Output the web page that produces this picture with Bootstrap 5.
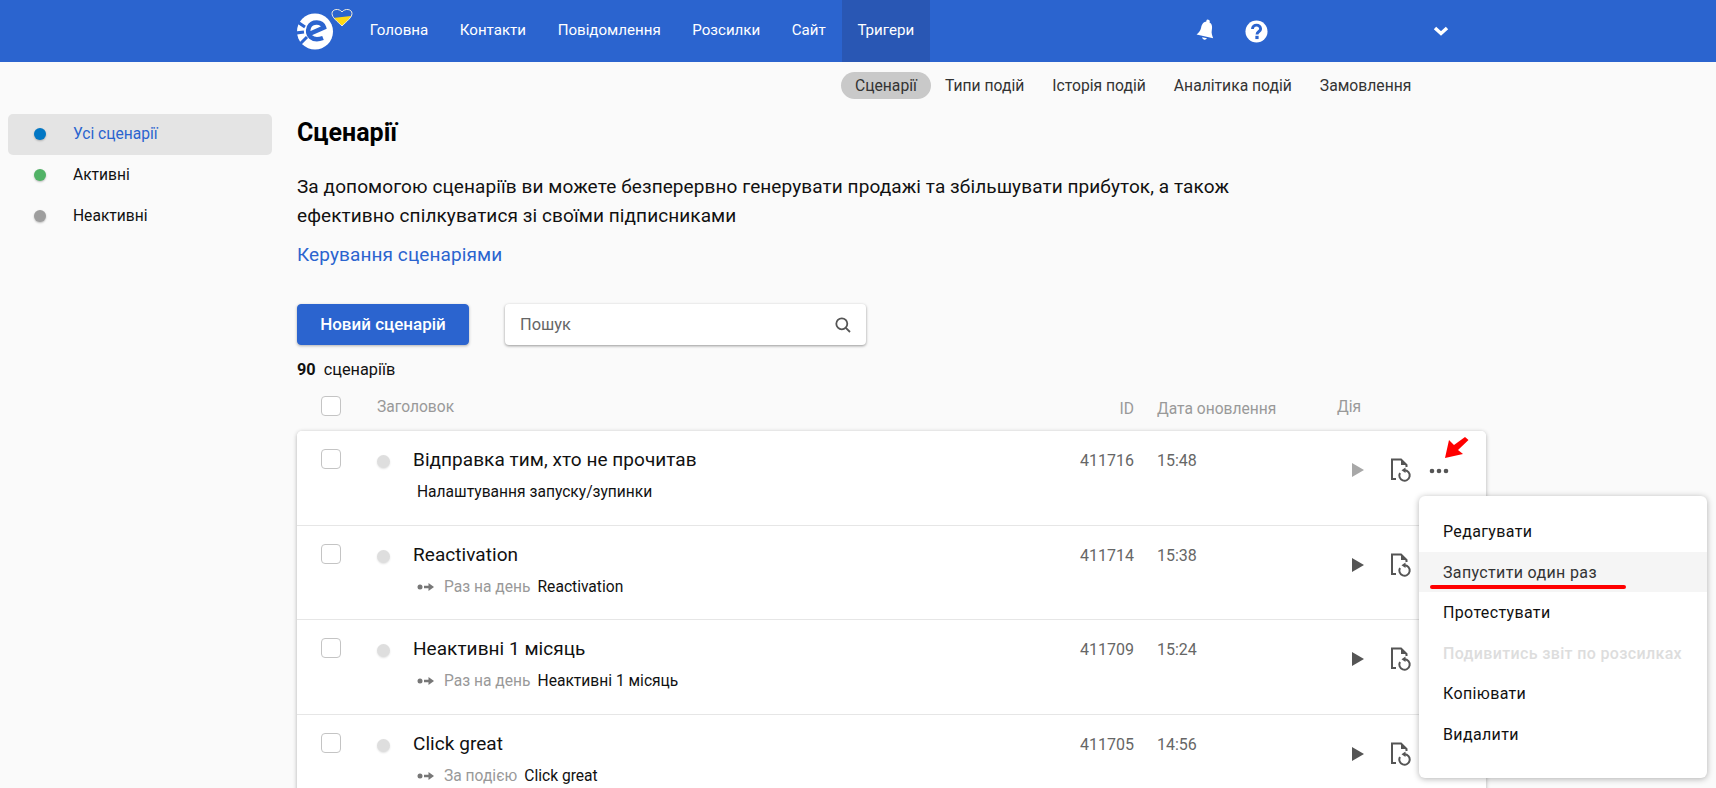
<!DOCTYPE html>
<html lang="uk">
<head>
    <meta charset="UTF-8">
    <meta name="viewport" content="width=device-width, initial-scale=1.0">
    <title>Сценарії</title>
    <link href="https://cdn.jsdelivr.net/npm/bootstrap@5.3.0/dist/css/bootstrap.min.css" rel="stylesheet">
    <style>
        html, body {
            height: 788px;
            overflow: hidden;
        }
        body {
            font-family: Roboto, "Liberation Sans", sans-serif;
            background-color: #fafafa;
            color: #111;
            position: relative;
        }
        .top-bar {
            background: #2b64cf;
            height: 62px;
            padding: 0 0 0 297px;
        }
        .logo-box {
            width: 57px;
            height: 62px;
            flex: none;
        }
        .top-bar .nav-link {
            color: #fff;
            font-size: 15.1px;
            height: 62px;
            line-height: 60px;
            padding: 0 15.8px;
        }
        .top-bar .nav-link.active {
            background: #2957b4;
            color: #fff;
        }
        .top-icons {
            margin-left: 266px;
        }
        .help-icon {
            margin-left: 29px;
        }
        .user-arrow {
            margin-left: 165px;
        }
        .sub-bar {
            height: 48px;
            padding: 10px 0 0 841px;
        }
        .sub-bar .nav-link {
            color: #333;
            font-size: 15.7px;
            height: 27px;
            line-height: 28px;
            padding: 0 14px;
            border-radius: 14px;
        }
        .sub-bar .nav-link.active {
            background: #c9c9c9;
            color: #333;
        }
        .side-col {
            width: 297px;
            flex: none;
            padding: 4px 25px 0 8px;
        }
        .side-col .nav-link {
            height: 41px;
            line-height: 41px;
            padding: 0 0 0 26px;
            color: #111;
            font-size: 15.6px;
            border-radius: 5px;
        }
        .side-col .nav-link.active {
            background: #e4e4e4;
            color: #2b64cf;
        }
        .state-dot {
            display: inline-block;
            width: 12px;
            height: 12px;
            border-radius: 50%;
            margin-right: 27px;
            box-shadow: 0 1px 2px rgba(0, 0, 0, .25);
            vertical-align: -1px;
        }
        .main-col {
            flex: 1;
            min-width: 0;
            width: 1189px;
        }
        .page-title {
            font-size: 25px;
            font-weight: 700;
            line-height: 28px;
            margin: 9px 0 26px;
            color: #000;
        }
        .page-text {
            font-size: 19px;
            line-height: 28.5px;
            width: 950px;
            margin: 0 0 9px;
            letter-spacing: .09px;
        }
        .page-link {
            font-size: 19px;
            line-height: 32px;
            color: #2b64cf;
            text-decoration: none;
            letter-spacing: .1px;
        }
        .tools {
            margin-top: 33px;
            gap: 36px;
        }
        .new-btn {
            width: 172px;
            height: 41px;
            background: #2b64cf;
            border-color: #2b64cf;
            font-size: 17px;
            font-weight: 500;
            border-radius: 4px;
            padding: 0;
            box-shadow: 0 1px 3px rgba(0, 0, 0, .3);
        }
        .search-box {
            width: 361px;
            height: 41px;
            background: #fff;
            border-radius: 4px;
            box-shadow: 0 1px 3px rgba(0, 0, 0, .4);
            padding: 0 15px;
        }
        .search-box input {
            border: 0;
            outline: 0;
            flex: 1;
            min-width: 0;
            font-size: 16.4px;
            padding: 2px 0 0;
            background: transparent;
        }
        .search-box input::placeholder {
            color: #666;
        }
        .count-line {
            font-size: 16.3px;
            line-height: 20px;
            margin-top: 15px;
        }
        .head-row {
            height: 51px;
            color: #999;
            font-size: 15.6px;
            padding-top: 16px;
        }
        .list-card {
            width: 1189px;
            border: 0;
            border-radius: 5px;
            box-shadow: 0 1px 4px rgba(0, 0, 0, .3);
            background: #fff;
        }
        .list-card .list-group-item {
            height: 94.5px;
            padding: 0;
            border-color: #e6e6e6;
            background: #fff;
            color: #111;
        }
        .cell-check {
            width: 116px;
            flex: none;
            padding: 18px 0 0 24px;
        }
        .head-row .cell-check {
            padding-top: 0;
            width: 80px;
        }
        .head-row .cell-title {
            width: 677px;
        }
        .box {
            width: 20px;
            height: 20px;
            margin: 0;
            border: 1px solid #c4c4c4;
            border-radius: 4px;
            display: block;
            flex: none;
            background: #fff;
        }
        .off-dot {
            width: 13px;
            height: 13px;
            border-radius: 50%;
            background: #dedede;
            margin: 6px 0 0 35.5px;
            flex: none;
            box-shadow: 0 1px 2px rgba(0, 0, 0, .12);
        }
        .cell-title {
            width: 641px;
            flex: none;
            padding-top: 16px;
        }
        .row-name {
            font-size: 19px;
            line-height: 26px;
            letter-spacing: .05px;
        }
        .row-sub {
            font-size: 15.6px;
            line-height: 20px;
            margin-top: 9px;
            padding-left: 4px;
            white-space: nowrap;
        }
        .row-sub .freq {
            color: #999;
            margin-right: 7px;
        }
        .row-sub svg {
            margin-right: 9px;
            vertical-align: 0;
        }
        .cell-id {
            width: 80px;
            flex: none;
            text-align: right;
            color: #666;
            font-size: 16px;
            padding-top: 17px;
            line-height: 26px;
        }
        .cell-date {
            width: 180px;
            flex: none;
            margin-left: 23px;
            color: #666;
            font-size: 16px;
            padding-top: 17px;
            line-height: 26px;
        }
        .head-row .cell-id, .head-row .cell-date {
            padding-top: 0;
            color: #999;
            font-size: 15.6px;
        }
        .cell-act {
            flex: 1;
            padding: 32px 0 0 15px;
            gap: 26px;
        }
        .head-row .cell-act {
            padding: 0;
        }
        .doc-icon {
            margin-top: -5px;
        }
        .more-icon {
            margin: 5px 0 0 -9px;
        }
        .row-menu {
            position: absolute;
            left: 1419px;
            top: 496px;
            width: 288px;
            height: 282px;
            padding: 15px 0;
            border: 0;
            border-radius: 6px;
            box-shadow: 0 1px 6px rgba(0, 0, 0, .3);
            display: block;
            margin: 0;
        }
        .row-menu .dropdown-item {
            height: 40.6px;
            line-height: 42.6px;
            padding: 0 0 0 24px;
            font-size: 16px;
            letter-spacing: .35px;
            color: #111;
        }
        .row-menu .dropdown-item.hover-item {
            background: #f5f5f5;
            color: #333;
        }
        .row-menu .dropdown-item.disabled {
            color: #ddd;
            font-weight: 500;
        }
        .red-line {
            position: absolute;
            left: 1430px;
            top: 585px;
            width: 196px;
            height: 4px;
            border-radius: 2px;
            background: #f00;
            z-index: 1001;
        }
        .red-arrow {
            position: absolute;
            left: 1443px;
            top: 435px;
            z-index: 1001;
        }
    </style>
</head>
<body>
    <svg width="0" height="0" class="d-none">
        <symbol id="docRestart" viewBox="0 0 22 26">
            <path d="M6 21 H2 V1.500 H11 L16.500 7 V9" fill="none" stroke="#555" stroke-width="2"/>
            <path d="M11 1.500 V7 H16.500 Z" fill="#555"/>
            <path d="M14.500 12.300 A5.200 5.200 0 1 1 10 14.900" fill="none" stroke="#555" stroke-width="2"/>
            <path d="M11.500 12.300 L15.500 9.500 L15.500 15.100 Z" fill="#555"/>
        </symbol>
        <symbol id="stepArrow" viewBox="0 0 18 10">
            <circle cx="3" cy="5" r="2.500"/>
            <path d="M7 3.800 H11.500 V1 L17 5 L11.500 9 V6.200 H7 Z"/>
        </symbol>
    </svg>

    <nav class="top-bar d-flex align-items-center">
        <div class="logo-box d-flex">
            <svg width="57" height="62" viewBox="0 0 57 62">
                <circle cx="18" cy="31.500" r="18" fill="#fff"/>
                <path d="M-1 21 L8 27 M-1 33 L7 32 M3 44 L10 37" stroke="#2b64cf" stroke-width="3"/>
                <path d="M10 35 L27 27.500 C25 21 15 21 12 27 C9 35 15 42 26 38" fill="none" stroke="#2b64cf" stroke-width="4.500"/>
                <path d="M45 26 C40 21 35 17.500 35 13.500 C35 9 42 8 45 12 C48 8 55 9 55 13.500 C55 17.500 50 21 45 26 Z" fill="#ffd915"/>
                <path d="M35 13.500 C35 9 42 8 45 12 C48 8 55 9 55 13.500 L54 16 L36 18 Z" fill="#2b64cf"/>
                <path d="M45 26 C40 21 35 17.500 35 13.500 C35 9 42 8 45 12 C48 8 55 9 55 13.500 C55 17.500 50 21 45 26 Z" fill="none" stroke="#e8e8e8" stroke-width="1"/>
            </svg>
        </div>
        <ul class="nav">
            <li class="nav-item"><a class="nav-link" href="#">Головна</a></li>
            <li class="nav-item"><a class="nav-link" href="#">Контакти</a></li>
            <li class="nav-item"><a class="nav-link" href="#">Повідомлення</a></li>
            <li class="nav-item"><a class="nav-link" href="#">Розсилки</a></li>
            <li class="nav-item"><a class="nav-link" href="#">Сайт</a></li>
            <li class="nav-item"><a class="nav-link active" href="#">Тригери</a></li>
        </ul>
        <div class="top-icons d-flex align-items-center">
            <svg width="20" height="24" viewBox="0 0 20 24" fill="#fff">
                <g transform="rotate(12 10 12)">
                    <circle cx="10" cy="2.200" r="1.800"/>
                    <path d="M10 2.500 C14 2.500 15.500 6 15.500 10 C15.500 13 17 15 18.500 17.500 H1.500 C3 15 4.500 13 4.500 10 C4.500 6 6 2.500 10 2.500 Z"/>
                    <path d="M7.500 19 H12.500 A2.600 2.600 0 0 1 7.500 19 Z"/>
                </g>
            </svg>
            <svg class="help-icon" width="23" height="23" viewBox="0 0 24 24">
                <circle cx="12" cy="12" r="11.500" fill="#fff"/>
                <path d="M7.800 9.500 C7.800 4 16.300 4 16.300 9.300 C16.300 12 12.500 12 12.500 15" fill="none" stroke="#2b64cf" stroke-width="3"/>
                <rect x="10.800" y="16.500" width="3.400" height="3.400" fill="#2b64cf"/>
            </svg>
            <svg class="user-arrow" width="16" height="10" viewBox="0 0 16 10">
                <path d="M2 2 L8 7.500 L14 2" fill="none" stroke="#fff" stroke-width="3.500"/>
            </svg>
        </div>
    </nav>

    <ul class="nav sub-bar">
        <li class="nav-item"><a class="nav-link active" href="#">Сценарії</a></li>
        <li class="nav-item"><a class="nav-link" href="#">Типи подій</a></li>
        <li class="nav-item"><a class="nav-link" href="#">Історія подій</a></li>
        <li class="nav-item"><a class="nav-link" href="#">Аналітика подій</a></li>
        <li class="nav-item"><a class="nav-link" href="#">Замовлення</a></li>
    </ul>

    <div class="d-flex">
        <div class="side-col">
            <ul class="nav flex-column">
                <li class="nav-item"><a class="nav-link active" href="#"><span class="state-dot" style="background:#0277c4"></span>Усі сценарії</a></li>
                <li class="nav-item"><a class="nav-link" href="#"><span class="state-dot" style="background:#51b266"></span>Активні</a></li>
                <li class="nav-item"><a class="nav-link" href="#"><span class="state-dot" style="background:#9e9e9e"></span>Неактивні</a></li>
            </ul>
        </div>

        <div class="main-col">
            <h1 class="page-title">Сценарії</h1>
            <p class="page-text">За допомогою сценаріїв ви можете безперервно генерувати продажі та збільшувати прибуток, а також ефективно спілкуватися зі своїми підписниками</p>
            <a class="page-link" href="#">Керування сценаріями</a>

            <div class="tools d-flex">
                <button class="btn btn-primary new-btn" type="button">Новий сценарій</button>
                <div class="search-box d-flex align-items-center">
                    <input type="text" placeholder="Пошук">
                    <svg width="16" height="16" viewBox="0 0 16 16" fill="none" stroke="#555" stroke-width="1.800">
                        <circle cx="6.800" cy="6.800" r="5.500"/>
                        <path d="M10.800 10.800 L15 15"/>
                    </svg>
                </div>
            </div>

            <div class="count-line"><b>90</b>&nbsp; сценаріїв</div>

            <div class="head-row d-flex">
                <div class="cell-check"><span class="box"></span></div>
                <div class="cell-title p-0">Заголовок</div>
                <div class="cell-id">ID</div>
                <div class="cell-date">Дата оновлення</div>
                <div class="cell-act d-flex">Дія</div>
            </div>

            <div class="card list-card">
                <ul class="list-group list-group-flush">
                    <li class="list-group-item d-flex">
                        <div class="cell-check d-flex"><span class="box"></span><span class="off-dot"></span></div>
                        <div class="cell-title">
                            <div class="row-name">Відправка тим, хто не прочитав</div>
                            <div class="row-sub">Налаштування запуску/зупинки</div>
                        </div>
                        <div class="cell-id">411716</div>
                        <div class="cell-date">15:48</div>
                        <div class="cell-act d-flex">
                            <svg width="12" height="14" viewBox="0 0 12 14"><path d="M0 0 L12 7 L0 14 Z" fill="#a8a8a8"/></svg>
                            <svg class="doc-icon" width="22" height="26"><use href="#docRestart"/></svg>
                            <svg class="more-icon" width="20" height="6" viewBox="0 0 20 6" fill="#555"><circle cx="3" cy="3" r="2.300"/><circle cx="10" cy="3" r="2.300"/><circle cx="17" cy="3" r="2.300"/></svg>
                        </div>
                    </li>
                    <li class="list-group-item d-flex">
                        <div class="cell-check d-flex"><span class="box"></span><span class="off-dot"></span></div>
                        <div class="cell-title">
                            <div class="row-name">Reactivation</div>
                            <div class="row-sub"><svg width="18" height="10" fill="#777"><use href="#stepArrow"/></svg><span class="freq">Раз на день</span>Reactivation</div>
                        </div>
                        <div class="cell-id">411714</div>
                        <div class="cell-date">15:38</div>
                        <div class="cell-act d-flex">
                            <svg width="12" height="14" viewBox="0 0 12 14"><path d="M0 0 L12 7 L0 14 Z" fill="#555"/></svg>
                            <svg class="doc-icon" width="22" height="26"><use href="#docRestart"/></svg>
                        </div>
                    </li>
                    <li class="list-group-item d-flex">
                        <div class="cell-check d-flex"><span class="box"></span><span class="off-dot"></span></div>
                        <div class="cell-title">
                            <div class="row-name">Неактивні 1 місяць</div>
                            <div class="row-sub"><svg width="18" height="10" fill="#777"><use href="#stepArrow"/></svg><span class="freq">Раз на день</span>Неактивні 1 місяць</div>
                        </div>
                        <div class="cell-id">411709</div>
                        <div class="cell-date">15:24</div>
                        <div class="cell-act d-flex">
                            <svg width="12" height="14" viewBox="0 0 12 14"><path d="M0 0 L12 7 L0 14 Z" fill="#555"/></svg>
                            <svg class="doc-icon" width="22" height="26"><use href="#docRestart"/></svg>
                        </div>
                    </li>
                    <li class="list-group-item d-flex">
                        <div class="cell-check d-flex"><span class="box"></span><span class="off-dot"></span></div>
                        <div class="cell-title">
                            <div class="row-name">Click great</div>
                            <div class="row-sub"><svg width="18" height="10" fill="#777"><use href="#stepArrow"/></svg><span class="freq">За подією</span>Click great</div>
                        </div>
                        <div class="cell-id">411705</div>
                        <div class="cell-date">14:56</div>
                        <div class="cell-act d-flex">
                            <svg width="12" height="14" viewBox="0 0 12 14"><path d="M0 0 L12 7 L0 14 Z" fill="#555"/></svg>
                            <svg class="doc-icon" width="22" height="26"><use href="#docRestart"/></svg>
                        </div>
                    </li>
                </ul>
            </div>
        </div>
    </div>

    <!-- menu opened from the first row -->
    <ul class="dropdown-menu row-menu">
        <li><a class="dropdown-item" href="#">Редагувати</a></li>
        <li><a class="dropdown-item hover-item" href="#">Запустити один раз</a></li>
        <li><a class="dropdown-item" href="#">Протестувати</a></li>
        <li><a class="dropdown-item disabled" href="#">Подивитись звіт по розсилках</a></li>
        <li><a class="dropdown-item" href="#">Копіювати</a></li>
        <li><a class="dropdown-item" href="#">Видалити</a></li>
    </ul>

    <div class="red-line"></div>
    <svg class="red-arrow" width="28" height="26" viewBox="0 0 28 26">
        <path d="M2 23 L6 5 L11 10 L22 2 L25.500 5 L15 15 L20 19 Z" fill="#f00"/>
    </svg>

    <script src="https://cdn.jsdelivr.net/npm/bootstrap@5.3.0/dist/js/bootstrap.bundle.min.js"></script>
</body>
</html>
